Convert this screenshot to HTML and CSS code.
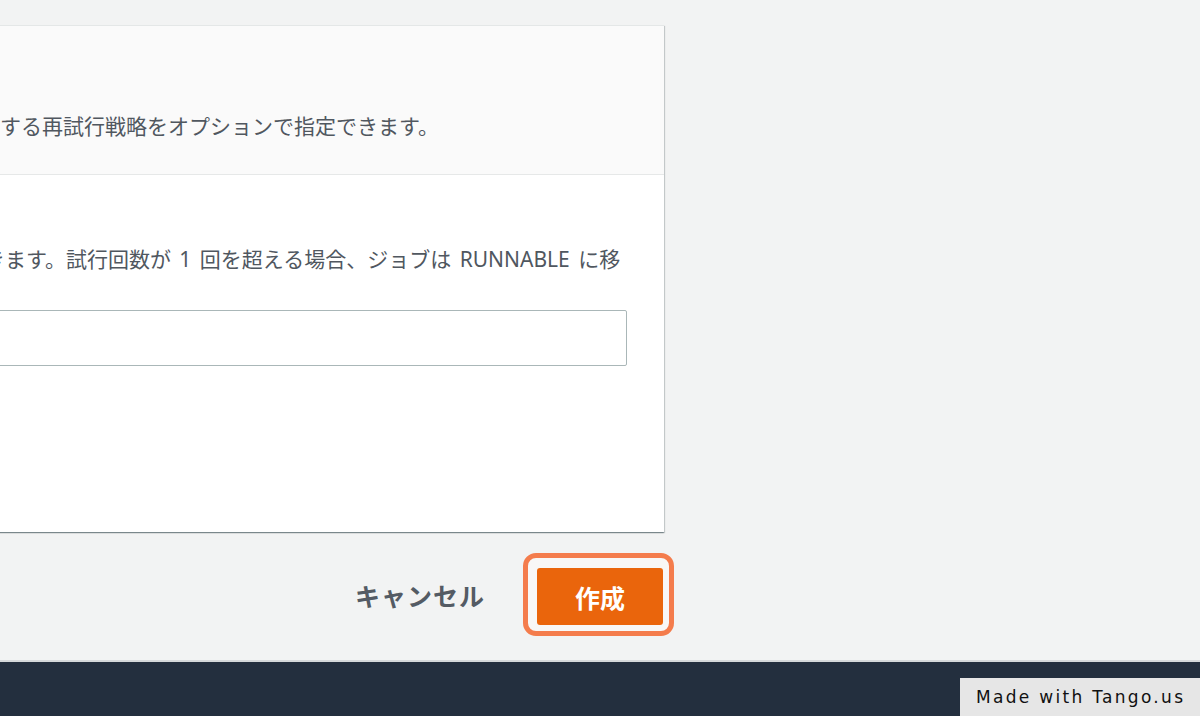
FILE: index.html
```html
<!DOCTYPE html>
<html lang="ja">
<head>
<meta charset="utf-8">
<title>ジョブ定義の作成</title>
<link rel="stylesheet" href="styles.css">
</head>
<body>
<div class="page">
  <main class="main">
    <section class="card">
      <header class="card-header">
        <h2 class="card-title">再試行戦略</h2>
        <p class="card-desc">失敗したジョブに対する再試行戦略をオプションで指定できます。</p>
      </header>
      <div class="card-body">
        <label class="field-label" for="attempts">ジョブの試行</label>
        <p class="field-desc">試行回数を指定できます。試行回数が 1 回を超える場合、ジョブは RUNNABLE に移動されます。</p>
        <input class="field-input" id="attempts" type="text">
      </div>
    </section>
    <div class="actions">
      <button class="btn btn-cancel" type="button">キャンセル</button>
      <span class="focus-ring"><button class="btn btn-primary" type="button">作成</button></span>
    </div>
  </main>
  <footer class="footer">
    <div class="tango-badge">Made with Tango.us</div>
  </footer>
</div>
</body>
</html>
```

FILE: styles.css
```css
* {
  box-sizing: border-box;
}

html, body {
  margin: 0;
  padding: 0;
}

body {
  width: 1200px;
  height: 716px;
  overflow: hidden;
  background: #f2f3f3;
  font-family: "Noto Sans", "Noto Sans CJK JP", sans-serif;
  color: #50575f;
}

.page {
  display: flex;
  flex-direction: column;
  height: 716px;
}

.main {
  height: 662px;
  padding-top: 25px;
  border-bottom: 2px solid #d5d9da;
  flex: none;
}

.card {
  width: 873px;
  margin-left: -209px;
  background: #ffffff;
  border-top: 1px solid #e4e7e7;
  box-shadow: 0 1px 1px 0 rgba(0, 28, 36, 0.3), 1px 1px 1px 0 rgba(0, 28, 36, 0.15), -1px 1px 1px 0 rgba(0, 28, 36, 0.15);
}

.card-header {
  background: #fafafa;
  border-bottom: 1px solid #e6e8e8;
  padding: 30px 37px 34px 20px;
}

.card-title {
  margin: 0;
  font-size: 22px;
  line-height: 32px;
  font-weight: 700;
  color: #16191f;
  white-space: nowrap;
}

.card-desc {
  margin: 24px 0 0;
  font-size: 21px;
  line-height: 28px;
  white-space: nowrap;
}

.card-body {
  padding: 24px 37px 166px 20px;
}

.field-label {
  display: block;
  font-size: 20px;
  line-height: 28px;
  font-weight: 700;
  color: #16191f;
}

.field-desc {
  margin: 18px 0 0;
  padding-left: 5px;
  font-size: 21px;
  line-height: 28px;
  word-spacing: 3px;
}

.field-input {
  display: block;
  width: 100%;
  height: 56px;
  margin-top: 9px;
  border: 1px solid #aab7b8;
  border-radius: 2px;
  background: #ffffff;
  font: inherit;
}

.actions {
  width: 674px;
  margin-top: 21px;
  display: flex;
  justify-content: flex-end;
  align-items: center;
}

.btn {
  font-family: "Noto Sans", "Noto Sans CJK JP", sans-serif;
  font-size: 25px;
  font-weight: 700;
  border: none;
  cursor: pointer;
}

.btn-cancel {
  background: transparent;
  color: #545b64;
  padding: 0 20px;
  margin-right: 18px;
  margin-top: 3px;
  line-height: 40px;
  letter-spacing: 1px;
}

.focus-ring {
  display: inline-flex;
  padding: 10px 6px 6px 9px;
  border: 5px solid #f47c4c;
  border-radius: 13px;
  background: #f8f7f6;
}

.btn-primary {
  width: 126px;
  height: 57px;
  background: #ea650c;
  color: #ffffff;
  border-radius: 3px;
  padding: 0;
}

.footer {
  flex: 1;
  background: #232f3e;
  display: flex;
  justify-content: flex-end;
  align-items: flex-end;
}

.tango-badge {
  height: 38px;
  width: 240px;
  padding-left: 16px;
  background: #e6e6e6;
  color: #111111;
  font-family: "DejaVu Sans", sans-serif;
  font-size: 17px;
  letter-spacing: 2.3px;
  line-height: 38px;
  white-space: nowrap;
}
```
